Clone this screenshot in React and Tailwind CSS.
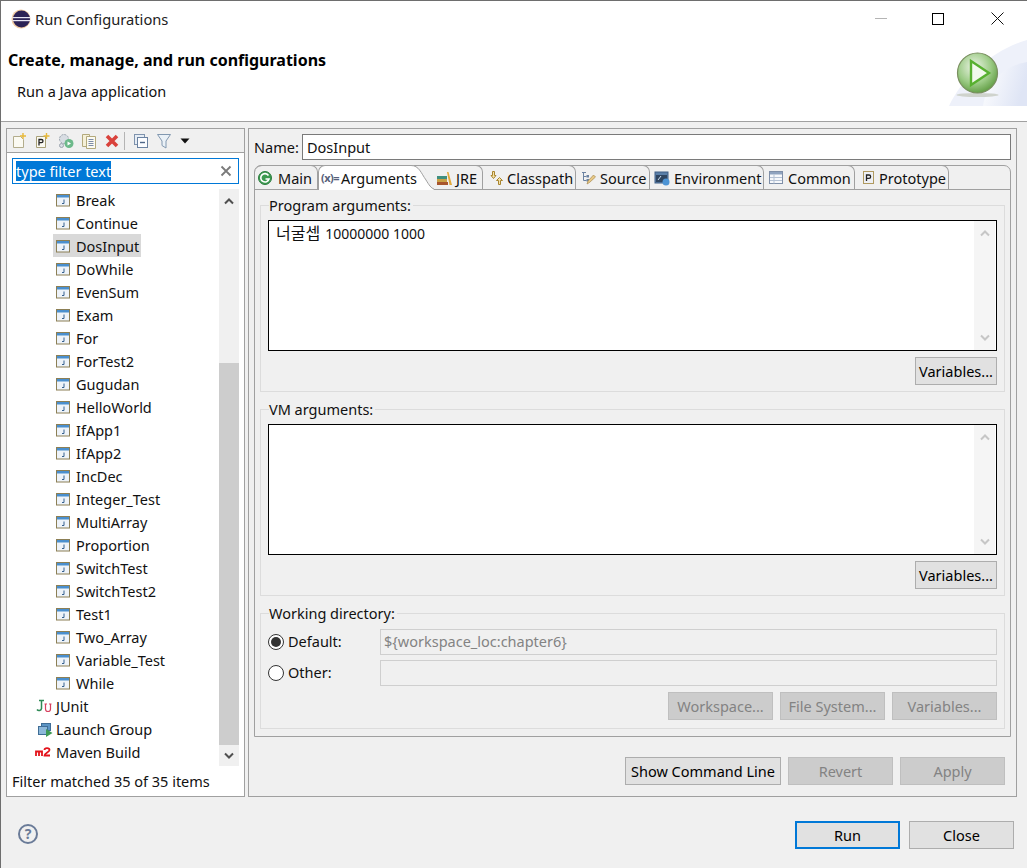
import React from 'react';

const classNames = ['Break', 'Continue', 'DosInput', 'DoWhile', 'EvenSum', 'Exam', 'For', 'ForTest2', 'Gugudan', 'HelloWorld', 'IfApp1', 'IfApp2', 'IncDec', 'Integer_Test', 'MultiArray', 'Proportion', 'SwitchTest', 'SwitchTest2', 'Test1', 'Two_Array', 'Variable_Test', 'While'];

const JavaIcon = () => (
  <svg width="16" height="16" viewBox="0 0 16 16" className="shrink-0">
    <rect x="0.500" y="2.500" width="13" height="11.500" fill="#eef3f9" stroke="#8c7f55" />
    <rect x="1" y="3" width="12" height="2.500" fill="#4a8fce" />
    <path d="M8 7.500v4H6" fill="none" stroke="#35608f" strokeWidth="1" />
  </svg>
);

const EclipseIcon = () => (
  <svg width="20" height="20" viewBox="0 0 20 20" className="shrink-0">
    <circle cx="10" cy="10" r="9.500" fill="#f0c9a0" />
    <circle cx="10.500" cy="10" r="8.500" fill="#2c2255" />
    <rect x="1.500" y="8" width="18" height="1.200" fill="#e8e6f2" />
    <rect x="1.500" y="11" width="18" height="1.200" fill="#e8e6f2" />
  </svg>
);

const Chevron = ({ down, color = '#505050' }) => (
  <svg width="12" height="8" viewBox="0 0 12 8">
    <path d={down ? 'M2 1.500 6 5.500l4-4' : 'M2 6.500 6 2.500l4 4'} fill="none" stroke={color} strokeWidth="2" />
  </svg>
);

const RunBanner = () => (
  <svg width="78" height="66" viewBox="0 0 78 66" className="shrink-0">
    <defs>
      <linearGradient id="bannerBg" x1="0" y1="0" x2="1" y2="0.300">
        <stop offset="0" stopColor="#ffffff" />
        <stop offset="1" stopColor="#dfe5f5" />
      </linearGradient>
      <radialGradient id="ball" cx="0.420" cy="0.350" r="0.750">
        <stop offset="0" stopColor="#eef4e8" />
        <stop offset="0.550" stopColor="#9ccb86" />
        <stop offset="1" stopColor="#4f8f30" />
      </radialGradient>
    </defs>
    <path d="M0 66C14 36 44 10 78 0v66z" fill="#eef1fa" />
    <path d="M34 66C38 40 56 26 78 22v44z" fill="url(#bannerBg)" />
    <ellipse cx="28.500" cy="55" rx="21" ry="2" fill="#cfd3cd" />
    <circle cx="28.500" cy="33" r="20" fill="url(#ball)" stroke="#7a8f60" strokeWidth="1.200" />
    <path d="M22 21 40 33 22 45z" fill="#f2f9ec" stroke="#58b030" strokeWidth="2.400" />
  </svg>
);

const ToolbarIcons = () => (
  <div className="flex items-center h-[23px] pl-[5px] gap-[7px]">
    <svg width="16" height="16" viewBox="0 0 16 16">
      <path d="M1.500 3.500h7l3 3v8h-10z" fill="#fbfaf2" stroke="#b3ad8c" />
      <path d="M11 0v6M8 3h6" stroke="#e8b93a" strokeWidth="1.400" />
    </svg>
    <svg width="16" height="16" viewBox="0 0 16 16">
      <path d="M1.500 3.500h9v11h-9z" fill="#fbfaf2" stroke="#a8a078" />
      <path d="M4 12.500v-6h2.400a1.500 1.500 0 0 1 0 3.200H4" fill="none" stroke="#222" strokeWidth="1.300" />
      <path d="M11.500 0v6M8.500 3h6" stroke="#e8b93a" strokeWidth="1.400" />
    </svg>
    <svg width="16" height="16" viewBox="0 0 16 16">
      <circle cx="6" cy="6" r="4.500" fill="#d8dde3" stroke="#9aa3ad" strokeDasharray="2 1" />
      <circle cx="3.500" cy="12.500" r="2" fill="#d8dde3" stroke="#9aa3ad" />
      <circle cx="11" cy="10.500" r="4.500" fill="#6cb98a" />
      <path d="M9.500 8.500 13 10.500 9.500 12.500z" fill="#fff" />
    </svg>
    <svg width="16" height="16" viewBox="0 0 16 16">
      <path d="M1.500 1.500h7v12h-7z" fill="#f5f0d8" stroke="#b3a97c" />
      <path d="M5.500 3.500h9v12h-9z" fill="#fbfaf2" stroke="#b3a97c" />
      <path d="M7.500 6.500h5M7.500 8.500h5M7.500 10.500h5M7.500 12.500h5" stroke="#7d8ca8" />
    </svg>
    <svg width="16" height="16" viewBox="0 0 16 16">
      <path d="m3 3 10 10M13 3 3 13" stroke="#d9423c" strokeWidth="3.600" />
    </svg>
    <div className="w-px h-[18px] bg-[#b4b4b4] -ml-[3px]" />
    <svg width="16" height="16" viewBox="0 0 16 16" className="ml-[1px]">
      <rect x="1.500" y="1.500" width="10" height="10" fill="#e6edf5" stroke="#7f93ad" />
      <rect x="4.500" y="4.500" width="10" height="10" fill="#fbfcfe" stroke="#6b82a1" />
      <path d="M7 9.500h5" stroke="#4f6788" strokeWidth="1.400" />
    </svg>
    <svg width="16" height="16" viewBox="0 0 16 16">
      <path d="M1.500 1.500h13L10 8v7l-4-2.500V8z" fill="#eaf1f7" stroke="#8298b0" />
    </svg>
    <svg width="12" height="16" viewBox="0 0 12 16">
      <path d="M1.500 5.500h9l-4.500 5z" fill="#111" />
    </svg>
  </div>
);

const ScrollTrack = () => (
  <div className="w-[20px] h-[577px] shrink-0 ml-auto mr-[5px] bg-[#f0f0f0] flex flex-col">
    <div className="h-[23px] flex items-center justify-center"><Chevron /></div>
    <div className="h-[151px]" />
    <div className="h-[382px] bg-[#cdcdcd]" />
    <div className="h-[21px] flex items-center justify-center"><Chevron down /></div>
  </div>
);

const Tree = () => (
  <div className="flex mt-[5px] h-[577px] overflow-hidden">
    <div className="flex-1 min-w-0 -mt-px">
      {classNames.map((name) => (
        <div key={name} className="h-[23px] flex items-center pl-[46px]">
          <div className={`flex items-center h-[23px] pl-[3px] pr-[2px] gap-[4px] ${name === 'DosInput' ? 'bg-[#d9d9d9]' : ''}`}>
            <JavaIcon />
            <span>{name}</span>
          </div>
        </div>
      ))}
      <div className="h-[23px] flex items-center pl-[29px] gap-[4px]">
        <svg width="16" height="16" viewBox="0 0 16 16" className="shrink-0">
          <path d="M3 2.500h5M5.500 2.500v8a2.500 2.500 0 0 1-4.500 1" fill="none" stroke="#2f8a56" strokeWidth="1.500" />
          <path d="M9.500 6v5a2.300 2.300 0 0 0 5 0V6M8.500 6h2.500M13 6h2.500" fill="none" stroke="#d7405f" strokeWidth="1.200" />
        </svg>
        <span>JUnit</span>
      </div>
      <div className="h-[23px] flex items-center pl-[30px] gap-[3px]">
        <svg width="16" height="16" viewBox="0 0 16 16" className="shrink-0">
          <rect x="4.500" y="2.500" width="9" height="7" fill="#5b94c4" stroke="#3f6d96" />
          <rect x="1.500" y="5.500" width="9" height="8" fill="#8db8da" stroke="#3f6d96" />
          <path d="M9 8 15.500 12 9 16z" fill="#3f9a55" />
        </svg>
        <span>Launch Group</span>
      </div>
      <div className="h-[23px] flex items-center pl-[28px] gap-[5px]">
        <svg width="16" height="16" viewBox="0 0 16 16" className="shrink-0">
          <path d="M1 12V7.500h6V12M4 7.500V12" fill="none" stroke="#e3131b" strokeWidth="1.800" />
          <path d="M9.500 6c0-2.500 5-2.500 5 0 0 2-5 3-5 5.500h5.500" fill="none" stroke="#e3131b" strokeWidth="1.800" />
        </svg>
        <span>Maven Build</span>
      </div>
    </div>
    <ScrollTrack />
  </div>
);

const ActionButton = ({ children, disabled, className = '' }) => (
  <button className={`h-[28px] flex items-center justify-center border ${disabled ? 'bg-[#cccccc] border-[#bfbfbf] text-[#838383]' : 'bg-[#e1e1e1] border-[#adadad] text-black'} ${className}`}>
    {children}
  </button>
);

const TextBox = ({ children }) => (
  <div className="h-[131px] mt-[5px] border border-black bg-white flex justify-between pr-px">
    <div className="pl-[7px] pt-[2px]">{children}</div>
    <div className="w-[21px] bg-[#f5f5f5] flex flex-col justify-between items-center py-[8px]">
      <Chevron color="#c6c6c6" />
      <Chevron down color="#c6c6c6" />
    </div>
  </div>
);

const ArgGroup = ({ title, children, className = '' }) => (
  <fieldset className={`border border-[#dcdcdc] px-[7px] ${className}`}>
    <legend className="ml-px pr-[2px] h-[20px] leading-[20px]">{title}</legend>
    {children}
  </fieldset>
);

const Tab = ({ width, icon, label, gap = 'gap-[5px]', pad = 'pl-[4px]' }) => (
  <div className={`h-[24px] -mt-px border-t border-r border-[#a0a0a0] rounded-tr-[7px] flex items-center ${pad} ${gap} ${width}`}>
    {icon}
    <span className="whitespace-nowrap">{label}</span>
  </div>
);

const Tabs = () => (
  <div className="flex h-[23px] border-b border-[#a0a0a0] box-content">
    <Tab
      width="w-[63px] rounded-tl-[7px]"
      pad="pl-[2px]"
      gap="gap-[5px]"
      icon={
        <svg width="16" height="16" viewBox="0 0 16 16" className="shrink-0">
          <circle cx="8" cy="8" r="6.500" fill="#3c9a50" stroke="#2d7d40" />
          <path d="M11.500 5.500A4.200 4.200 0 1 0 12 9H8.500" fill="none" stroke="#fff" strokeWidth="1.600" />
        </svg>
      }
      label="Main"
    />
    <div className="relative h-[24px] w-[91px] -mt-px mr-[21px] border-t border-l border-[#a0a0a0] rounded-tl-[7px] bg-white flex items-center pl-[2px] gap-[2px] z-10 mb-[-1px] box-content">
      <svg width="25" height="25" viewBox="0 0 25 25" className="absolute top-[-1px] left-[90px]">
        <path d="M0 .5h2C10 .500 12 8 17 15c3 5 5 8 8 9.500V25H0z" fill="#fff" />
        <path d="M0 .5h2C10 .500 12 8 17 15c3 5 5 8 8 9" fill="none" stroke="#a0a0a0" />
      </svg>
      <span className="relative text-[11px] font-bold text-[#56607a] whitespace-nowrap tracking-[-0.5px]">(x)=</span>
      <span className="relative whitespace-nowrap">Arguments</span>
    </div>
    <Tab
      width="w-[50px]"
      pad="pl-[4px]"
      gap="gap-[3px]"
      icon={
        <svg width="16" height="16" viewBox="0 0 16 16" className="shrink-0">
          <rect x="0" y="6" width="10" height="3" fill="#3f8f7f" />
          <rect x="0" y="9" width="10" height="3" fill="#c9a044" />
          <rect x="0" y="12" width="11" height="3" fill="#a8552c" />
          <path d="m10 2 1.500 0 3.500 13h-2.500z" fill="#e3a93b" />
        </svg>
      }
      label="JRE"
    />
    <Tab
      width="w-[93px]"
      pad="pl-[5px]"
      gap="gap-[3px]"
      icon={
        <svg width="16" height="16" viewBox="0 0 16 16" className="shrink-0">
          <path d="M4.500 1.500h2v4H8L5.500 8.500 3 5.500h1.500z" fill="#f5e3a8" stroke="#a8842e" />
          <path d="M10.500 14.500h2v-4H14.500L11.500 7.500 8.500 10.500h2z" fill="#f5e3a8" stroke="#a8842e" />
        </svg>
      }
      label="Classpath"
    />
    <Tab
      width="w-[74px]"
      gap="gap-[4px]"
      icon={
        <svg width="16" height="16" viewBox="0 0 16 16" className="shrink-0">
          <path d="M2 2.500h4M3.500 2.500v8h3M3.500 6.500h3" fill="none" stroke="#6b82a1" />
          <rect x="6.500" y="5" width="2.500" height="2.500" fill="#6b82a1" />
          <rect x="6.500" y="9" width="2.500" height="2.500" fill="#6b82a1" />
          <path d="m7 14 1-3 5.500-6 2 2-6 5.500z" fill="#e8c987" stroke="#a78a4f" strokeWidth="0.700" />
        </svg>
      }
      label="Source"
    />
    <Tab
      width="w-[114px]"
      gap="gap-[4px]"
      icon={
        <svg width="16" height="16" viewBox="0 0 16 16" className="shrink-0">
          <rect x="1" y="2" width="13" height="11" fill="#5a7fa8" stroke="#3f5f85" />
          <rect x="2" y="5" width="11" height="7" fill="#2f4560" />
          <path d="m4 10 3-4" stroke="#cfe0f0" />
          <circle cx="12" cy="12" r="3.500" fill="#4d94d4" />
        </svg>
      }
      label="Environment"
    />
    <Tab
      width="w-[91px]"
      pad="pl-[4px]"
      gap="gap-[4px]"
      icon={
        <svg width="16" height="16" viewBox="0 0 16 16" className="shrink-0">
          <rect x="1.500" y="1.500" width="13" height="12" fill="#f6f8fb" stroke="#7f8fa8" />
          <rect x="2" y="2" width="12" height="2.500" fill="#8fa3bf" />
          <path d="M2 7.500h12M2 10.500h12M6 4.500v9" stroke="#b5c2d4" />
        </svg>
      }
      label="Common"
    />
    <Tab
      width="w-[94px]"
      pad="pl-[6px]"
      gap="gap-[2px]"
      icon={
        <svg width="16" height="16" viewBox="0 0 16 16" className="shrink-0">
          <rect x="2.500" y="1.500" width="10" height="12" fill="#eef0f5" stroke="#b09a60" />
          <path d="M5.500 11V5h2.500a1.500 1.500 0 0 1 0 3.300H5.500" fill="none" stroke="#222" strokeWidth="1.300" />
        </svg>
      }
      label="Prototype"
    />
  </div>
);

const RadioRow = ({ checked, label, value, className = '' }) => (
  <div className={`flex items-center ${className}`}>
    <div className="w-[112px] flex items-center gap-[4px] shrink-0">
      <div className="w-[16px] h-[16px] rounded-full border border-[#333333] bg-white flex items-center justify-center">
        {checked && <div className="w-[10px] h-[10px] rounded-full bg-[#333333]" />}
      </div>
      <span className="pb-[2px]">{label}</span>
    </div>
    <div className="flex-1 h-[26px] border border-[#cfcfcf] bg-[#f0f0f0] flex items-center pl-[3px] pb-[2px] text-[#838383]">{value}</div>
  </div>
);

export default function App() {
  return (
    <div className="w-[1027px] h-[868px] overflow-hidden flex flex-col bg-[#f0f0f0] border-l border-t border-[#6e6e6e] text-[#111111] text-[14.5px] leading-[20px] font-['Noto_Sans','Noto_Sans_CJK_KR',sans-serif]">
      <div className="bg-white h-[121px] shrink-0 border-b border-[#a0a0a0] flex flex-col">
        <div className="flex items-center h-[35px] pl-[10px] shrink-0">
          <EclipseIcon />
          <span className="ml-[4px] text-[14.7px] text-[#222222]">Run Configurations</span>
          <div className="ml-auto flex items-center">
            <div className="w-[12px] h-px bg-[#b4b4b4] mr-[45px]" />
            <div className="w-[12px] h-[12px] border border-black mr-[47px]" />
            <svg width="13" height="13" viewBox="0 0 13 13" className="mr-[23px]">
              <path d="m.5.5 12 12M12.500.5l-12 12" stroke="#111" />
            </svg>
          </div>
        </div>
        <div className="flex flex-1 min-h-0 justify-between">
          <div className="pl-[7px] pt-[14px]">
            <div className="font-bold text-[16px] text-black">Create, manage, and run configurations</div>
            <div className="pl-[9px] mt-[11px]">Run a Java application</div>
          </div>
          <div className="pt-[4px]"><RunBanner /></div>
        </div>
      </div>

      <div className="flex pt-[6px] pl-[5px] gap-[3px]">
        <div className="w-[239px] h-[669px] border border-[#a0a0a0] bg-white flex flex-col">
          <div className="h-[24px] bg-[#f0f0f0] border-b border-[#a0a0a0] shrink-0"><ToolbarIcons /></div>
          <div className="mt-[5px] ml-[5px] w-[227px] h-[26px] border border-[#0078d7] flex items-center pl-[3px] pr-[5px] shrink-0">
            <span className="bg-[#0078d7] text-white h-[20px]">type filter text</span>
            <svg width="12" height="12" viewBox="0 0 12 12" className="ml-auto mr-[1px]">
              <path d="m1.500 1.500 9 9M10.500 1.500l-9 9" stroke="#7a7a7a" strokeWidth="1.800" />
            </svg>
          </div>
          <Tree />
          <div className="pl-[5px] mt-[5px]">Filter matched 35 of 35 items</div>
        </div>

        <div className="w-[769px] h-[669px] border border-[#a0a0a0] flex flex-col pl-[5px] pr-[5px] pt-[5px]">
          <div className="flex items-center h-[26px] shrink-0">
            <span className="w-[48px]">Name:</span>
            <div className="flex-1 h-[26px] border border-[#7a7a7a] bg-white flex items-center pl-[4px]">DosInput</div>
          </div>
          <div className="mt-[5px] border border-[#a0a0a0] rounded-t-[7px] h-[572px] shrink-0">
            <Tabs />
            <div className="px-[5px] pt-[5px]">
              <ArgGroup title="Program arguments:" className="pb-[6px]">
                <TextBox>
                  <span className="text-[16px] mr-[5px]">너굴셉</span>
                  <span className="text-[14px]">10000000 1000</span>
                </TextBox>
                <div className="flex justify-end mt-[6px]">
                  <ActionButton className="w-[82px]">Variables...</ActionButton>
                </div>
              </ArgGroup>
              <ArgGroup title="VM arguments:" className="mt-[7px] pb-[6px]">
                <TextBox />
                <div className="flex justify-end mt-[6px]">
                  <ActionButton className="w-[82px]">Variables...</ActionButton>
                </div>
              </ArgGroup>
              <ArgGroup title="Working directory:" className="mt-[7px] pb-[8px]">
                <RadioRow checked label="Default:" value="${workspace_loc:chapter6}" className="mt-[6px]" />
                <RadioRow label="Other:" value="" className="mt-[5px]" />
                <div className="flex justify-end gap-[7px] mt-[6px]">
                  <ActionButton disabled className="w-[105px]">Workspace...</ActionButton>
                  <ActionButton disabled className="w-[105px]">File System...</ActionButton>
                  <ActionButton disabled className="w-[105px]">Variables...</ActionButton>
                </div>
              </ArgGroup>
            </div>
          </div>
          <div className="flex justify-end gap-[7px] mt-[20px] pr-[6px]">
            <ActionButton className="w-[156px]">Show Command Line</ActionButton>
            <ActionButton disabled className="w-[105px]">Revert</ActionButton>
            <ActionButton disabled className="w-[105px]">Apply</ActionButton>
          </div>
        </div>
      </div>

      <div className="flex-1 flex items-start pt-[24px] pl-[17px] pr-[13px]">
        <div className="mt-[3px] w-[20px] h-[20px] rounded-full border-2 border-[#6a7b98] flex items-center justify-center text-[#6a7b98] font-bold text-[14px]">?</div>
        <div className="ml-auto flex gap-[9px]">
          <button className="w-[105px] h-[28px] border-2 border-[#0078d7] bg-[#e1e1e1] text-black">Run</button>
          <button className="w-[105px] h-[28px] border border-[#adadad] bg-[#e1e1e1] text-black">Close</button>
        </div>
      </div>
    </div>
  );
}
